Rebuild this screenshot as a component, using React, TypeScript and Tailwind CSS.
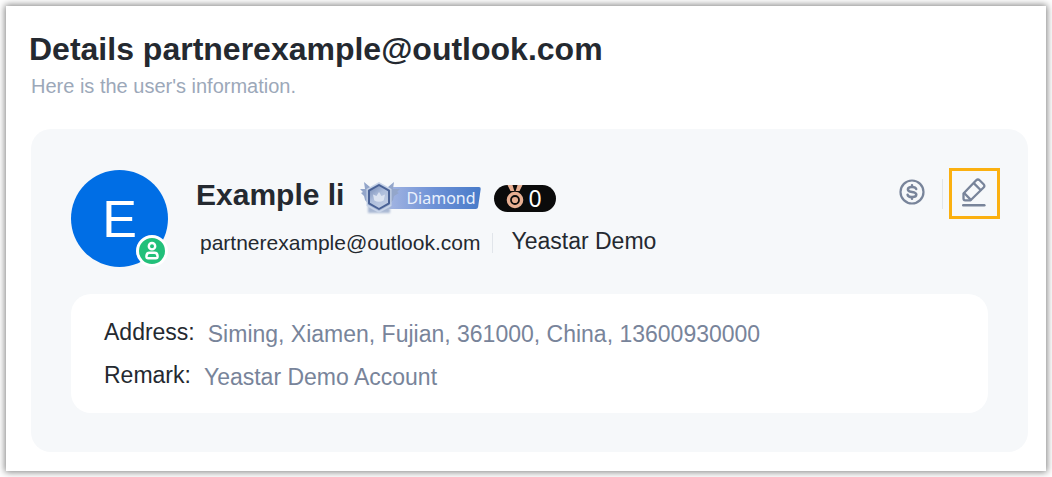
import React from "react";

function DollarIcon() {
  return (
    <svg viewBox="0 0 26 26" className="size-[26px]" fill="none" stroke="#78849a" strokeWidth="2.2" strokeLinecap="round" strokeLinejoin="round" aria-hidden="true">
      <circle cx="13" cy="13" r="11.5" />
      <path d="M17.200 10C16.800 8.600 15.300 7.900 13 7.900c-2.400 0-4.100.9-4.100 2.500 0 3.700 8.400 1.400 8.400 5.100 0 1.700-1.800 2.600-4.300 2.600-2.400 0-4.100-.9-4.400-2.400M13 6.200v1.700M13 18.100v1.700" strokeWidth="2.500" />
    </svg>
  );
}

function EditIcon() {
  return (
    <svg viewBox="0 0 24 30" className="h-[30px] w-6" fill="none" stroke="#78849a" strokeWidth="2.3" strokeLinecap="round" strokeLinejoin="round" aria-hidden="true">
      <path d="M1.500 15.500 14.200 2.300q1.700-1.700 3.400 0l4 4q1.600 1.600 0 3.200L8.600 22.300H3.200q-1.700 0-1.700-1.700z" />
      <path d="M12 5.400l6.600 6.600M2.400 15.200l6.200 6.400" />
      <path d="M1.300 27.300h21" strokeWidth="2.600" />
    </svg>
  );
}

function UserIcon() {
  return (
    <svg viewBox="0 0 16 20" className="h-5 w-4" fill="none" stroke="#fff" strokeWidth="2.4" aria-hidden="true">
      <circle cx="8" cy="5.200" r="3.200" />
      <path d="M2.400 15.500c0-2.200 1.200-3.700 3.200-3.700h4.800c2 0 3.200 1.500 3.200 3.700 0 1.400-.6 1.800-1.700 1.800H4.100c-1.100 0-1.700-.4-1.700-1.800z" />
    </svg>
  );
}

function DiamondBadge() {
  return (
    <div className="relative flex h-9 w-[122px] items-center">
      <svg viewBox="0 0 122 36" className="absolute inset-0 h-9 w-[122px]" aria-hidden="true">
        <defs>
          <linearGradient id="ribbon" x1="0" x2="1">
            <stop offset="0" stopColor="#a3b5e2" />
            <stop offset=".5" stopColor="#6d91d6" />
            <stop offset="1" stopColor="#487bc9" />
          </linearGradient>
          <linearGradient id="gem" x1="0" y1="0" x2="0.7" y2="1">
            <stop offset="0" stopColor="#6f86b3" />
            <stop offset=".5" stopColor="#adbddb" />
            <stop offset="1" stopColor="#c3cfe5" />
          </linearGradient>
          <filter id="soft" x="-20%" y="-20%" width="140%" height="140%">
            <feGaussianBlur stdDeviation="1.2" />
          </filter>
          <filter id="edge" x="-20%" y="-20%" width="140%" height="140%">
            <feGaussianBlur stdDeviation=".5" />
          </filter>
        </defs>
        <path d="M28 7h91q2 0 1.700 2l-2.600 18q-.3 2-2.300 2H28z" fill="url(#ribbon)" />
        <path d="M8 25h22v8H8z" fill="#a9b8d3" filter="url(#soft)" />
        <g filter="url(#edge)">
          <path d="M4 2l6 5-1 18-4-5-1-4-3-3 2-1-3-3 5 0zM34 2l-6 5 1 18 4-5 1-4 5-3-2-1 3-3-7 0z" fill="#93a6ca" />
          <path d="M19 2l12.500 7v17L19 33 6.500 26V9z" fill="#c8d4e8" />
        </g>
        <path d="M19 3.500l11.500 6.500v14.500L19 31 7.500 24.500V10z" fill="#a9b9d6" />
        <path d="M19 5l10 5.700v12.600L19 29 9 23.300V10.700z" fill="url(#gem)" stroke="#4a6296" strokeWidth="2" strokeLinejoin="round" />
        <path d="M13 14.500l3.500 1.500 2.500-4 2.500 4 3.500-1.500-1.300 6q-4.700 2.500-9.400 0z" fill="#dbe3f1" />
      </svg>
      <span className="relative pl-[46px] font-['Noto_Sans',sans-serif] text-base leading-6 text-[#eaf1fc]">Diamond</span>
    </div>
  );
}

function MedalBadge() {
  return (
    <div className="flex h-[27px] w-[62px] items-center gap-1 rounded-full bg-[#0b0b0b] pl-3 text-white">
      <svg viewBox="0 0 18 27" className="h-[27px] w-[18px]" fill="none" aria-hidden="true">
        <path d="M1.500 0h5l1.800 6H4.500zM16.500 0h-5L9.700 6h3.800z" fill="#e8af92" />
        <circle cx="9" cy="15" r="6.600" stroke="#e8af92" strokeWidth="3.400" />
        <circle cx="9" cy="15" r="3.100" fill="#e8af92" />
      </svg>
      <span className="font-['Noto_Sans',sans-serif] text-[23px] leading-7">0</span>
    </div>
  );
}

export default function App() {
  return (
    <div className="bg-white p-1.5 font-['Liberation_Sans',Arial,sans-serif] text-[#242930]">
      <main className="bg-white pt-[25px] pr-[18px] pb-[19px] pl-[25px] shadow-[0_0_7px_1px_rgba(0,0,0,0.5)]">
        <h1 className="-ml-0.5 text-[32px] leading-9 font-bold">Details partnerexample@outlook.com</h1>
        <p className="mt-[5px] text-[20px] leading-7 text-[#9ca8b9]">Here is the user's information.</p>
        <section className="mt-[29px] rounded-[20px] bg-[#f6f8fa] px-10 pt-[41px] pb-[39px]">
          <div className="flex items-start">
            <div className="relative flex size-[97px] shrink-0 items-center justify-center rounded-full bg-[#006ee5] text-[52px] text-white">
              E
              <span className="absolute right-0 bottom-0 flex size-8 items-center justify-center rounded-full border-3 border-white bg-[#22c07a]">
                <UserIcon />
              </span>
            </div>
            <div className="flex-1 pl-7">
              <div className="flex items-center">
                <h2 className="mr-4 text-[30px] leading-[50px] font-bold">Example li</h2>
                <div className="flex items-center gap-3 pt-1.5">
                  <DiamondBadge />
                  <MedalBadge />
                </div>
              </div>
              <div className="mt-0.5 flex items-center pl-1">
                <span className="text-[21px] leading-[42px]">partnerexample@outlook.com</span>
                <span className="mx-3 h-5 w-px bg-[#e1e5ea]" />
                <span className="pb-1 pl-1.5 text-[23px] leading-9">Yeastar Demo</span>
              </div>
            </div>
            <div className="-mt-0.5 -mr-3 flex items-center">
              <button type="button" aria-label="Credit" className="flex p-0 pb-1"><DollarIcon /></button>
              <span className="mr-1.5 ml-[17px] h-[30px] w-px bg-[#e1e5ea]" />
              <button type="button" aria-label="Edit" className="flex size-[51px] items-center justify-center border-3 border-[#fbb010] pr-0.5 pb-0.5"><EditIcon /></button>
            </div>
          </div>
          <dl className="mt-[27px] rounded-[20px] bg-white px-[33px] pt-[17px] pb-4 text-[23px] leading-[43px]">
            <div className="flex gap-[13px]">
              <dt>Address:</dt>
              <dd className="pt-1 leading-[39px] text-[#78849a]">Siming, Xiamen, Fujian, 361000, China, 13600930000</dd>
            </div>
            <div className="flex gap-[13px]">
              <dt>Remark:</dt>
              <dd className="pt-1 leading-[39px] text-[#78849a]">Yeastar Demo Account</dd>
            </div>
          </dl>
        </section>
      </main>
    </div>
  );
}
